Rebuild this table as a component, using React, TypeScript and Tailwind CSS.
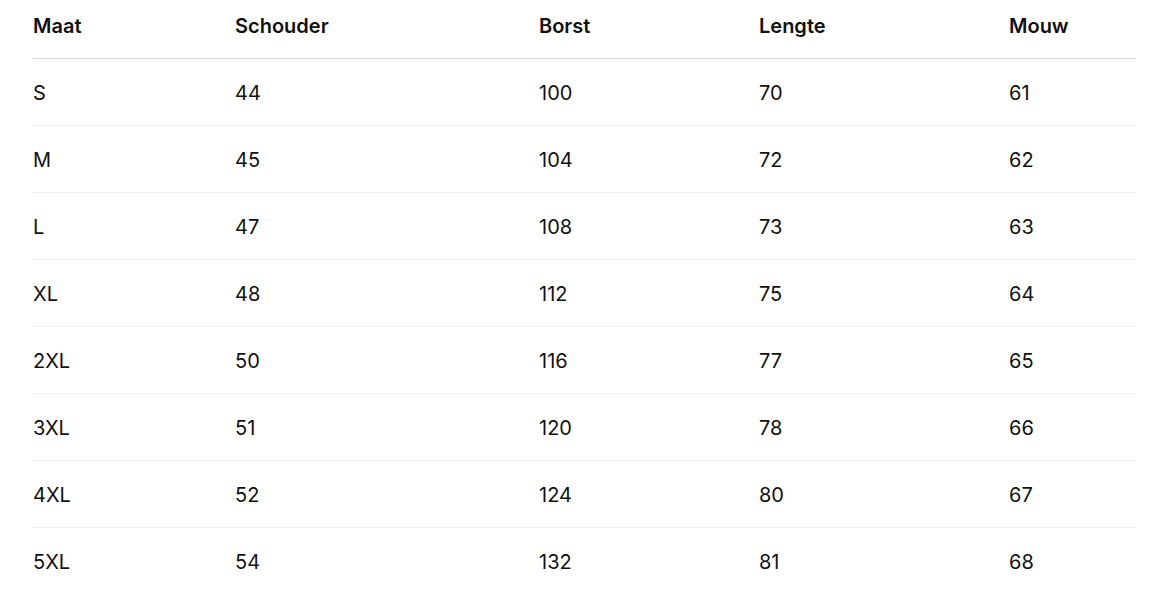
const rows = [
  ['S', '44', '100', '70', '61'],
  ['M', '45', '104', '72', '62'],
  ['L', '47', '108', '73', '63'],
  ['XL', '48', '112', '75', '64'],
  ['2XL', '50', '116', '77', '65'],
  ['3XL', '51', '120', '78', '66'],
  ['4XL', '52', '124', '80', '67'],
  ['5XL', '54', '132', '81', '68'],
];

const widths = ['w-[202px]', 'w-[304px]', 'w-[220px]', 'w-[250px]', 'w-[127px]'];

export default function App() {
  return (
    <div className="bg-white min-h-screen pl-[33px] font-['Inter',sans-serif] text-[#111111]">
      <table className="w-[1103px] table-fixed border-collapse text-[20px]">
        <thead>
          <tr className="border-b border-[#d8d8d8]">
            {['Maat', 'Schouder', 'Borst', 'Lengte', 'Mouw'].map((h, i) => (
              <th
                key={h}
                className={`${widths[i]} text-left font-semibold leading-[28px] pt-[12px] pb-[18px] p-0`}
              >
                {h}
              </th>
            ))}
          </tr>
        </thead>
        <tbody>
          {rows.map((r, ri) => (
            <tr
              key={r[0]}
              className={ri < rows.length - 1 ? 'border-b border-[#efefef]' : ''}
            >
              {r.map((c, ci) => (
                <td key={ci} className="h-[67px] leading-[28px] p-0 pt-[1px] align-middle">
                  {c}
                </td>
              ))}
            </tr>
          ))}
        </tbody>
      </table>
    </div>
  );
}
